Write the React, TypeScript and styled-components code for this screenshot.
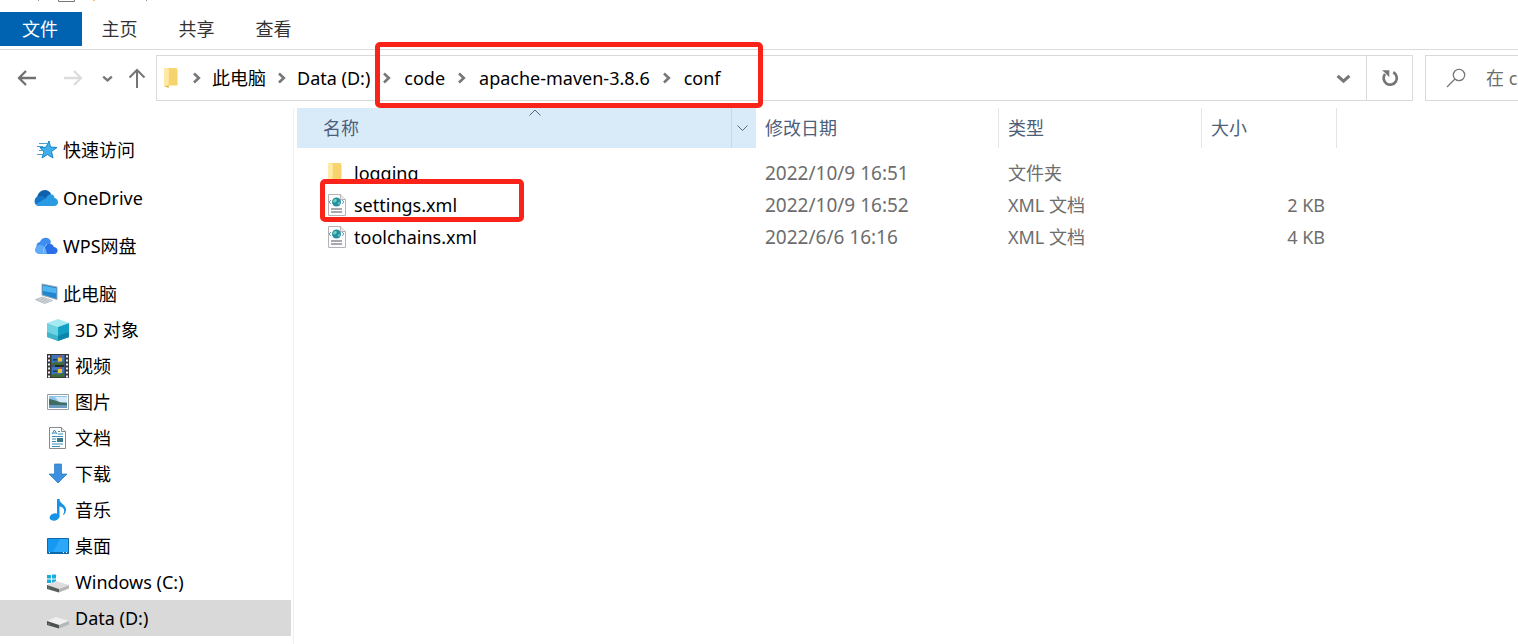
import React from 'react';
import styled, { createGlobalStyle } from 'styled-components';

const GlobalStyle = createGlobalStyle`
  * { box-sizing: border-box; }
  body {
    margin: 0;
    background: #fff;
    color: #000;
    font: 400 18px/24px "Noto Sans", "Noto Sans CJK SC", sans-serif;
  }
  button, input { font: inherit; color: inherit; }
  button { border: 0; background: none; padding: 0; cursor: default; }
  svg { display: block; flex: none; }
`;

const Window = styled.div`
  display: flex;
  flex-direction: column;
  min-height: 100vh;
  overflow: hidden;
`;

const TitleStrip = styled.div`
  display: flex;
  height: 12px;
  padding-left: 38px;
`;

const Ribbon = styled.nav`
  display: flex;
  height: 38px;
  padding-bottom: 3px;
  border-bottom: 1px solid #dadbdc;
`;

const RibbonTab = styled.button<{ $primary?: boolean }>`
  width: ${p => (p.$primary ? '82px' : '77px')};
  height: 34px;
  padding-right: 2px;
  background: ${p => (p.$primary ? '#0063b1' : 'transparent')};
  color: ${p => (p.$primary ? '#fff' : '#333')};
`;

const AddressRow = styled.div`
  display: flex;
  align-items: center;
  height: 58px;
  padding-bottom: 2px;
`;

const History = styled.div`
  display: flex;
  align-items: center;
  width: 156px;
  flex: none;
  padding-left: 4px;
`;

const NavButton = styled.button<{ $width: number }>`
  display: flex;
  justify-content: center;
  width: ${p => p.$width}px;
`;

const AddressBox = styled.div`
  display: flex;
  align-items: center;
  flex: 1;
  min-width: 0;
  height: 46px;
  padding-left: 6px;
  border: 1px solid #d9d9d9;
`;

const Separator = styled.span`
  display: flex;
  justify-content: center;
  width: 31px;
`;

const Crumbs = styled.div`
  display: flex;
  align-items: center;
  margin-left: 3px;
  white-space: nowrap;
`;

const CrumbGroup = styled(Crumbs)`
  position: relative;
  margin-left: 0;
  ${Separator} { width: 34px; }
`;

const Spacer = styled.div`
  flex: 1;
`;

const BoxButton = styled.button<{ $divided?: boolean }>`
  display: flex;
  align-items: center;
  justify-content: center;
  width: 46px;
  height: 44px;
  border-left: ${p => (p.$divided ? '1px solid #d9d9d9' : '0')};
`;

const SearchBox = styled.label`
  display: flex;
  align-items: center;
  gap: 20px;
  flex: none;
  width: 93px;
  height: 46px;
  margin-left: 12px;
  padding-left: 20px;
  border: 1px solid #d9d9d9;
  border-right: 0;
`;

const SearchInput = styled.input`
  flex: 1;
  min-width: 0;
  padding: 0;
  border: 0;
  outline: 0;
  background: none;
  &::placeholder { color: #6d6d6d; opacity: 1; }
`;

const Highlight = styled.span<{ $kind: 'path' | 'file' }>`
  position: absolute;
  z-index: 2;
  border: 5px solid #f9231a;
  border-radius: 5px;
  pointer-events: none;
  ${p => p.$kind === 'path'
    ? 'inset: -24px -42px -18px 5px;'
    : 'top: -10px; bottom: -1px; left: 23px; width: 204px;'}
`;

const Body = styled.div`
  display: flex;
  flex: 1;
`;

const Sidebar = styled.nav`
  flex: none;
  width: 294px;
  padding: 24px 2px 8px 0;
  border-right: 1px solid #f0f0f0;
`;

const Tree = styled.ul`
  margin: 0;
  padding: 0;
  list-style: none;
`;

const TreeGroup = styled.li`
  & + & { margin-top: 12px; }
`;

const TreeLink = styled.a<{ $child?: boolean; $selected?: boolean }>`
  display: flex;
  align-items: center;
  gap: 5px;
  height: 36px;
  padding-left: ${p => (p.$child ? '46px' : '34px')};
  background: ${p => (p.$selected ? '#d9d9d9' : 'transparent')};
  color: #000;
  text-decoration: none;
  white-space: nowrap;
`;

const Content = styled.main`
  flex: 1;
  min-width: 0;
  padding-left: 3px;
`;

const FileTable = styled.table`
  width: 1040px;
  table-layout: fixed;
  border-collapse: separate;
  border-spacing: 0;
`;

const HeadCell = styled.th<{ $width: number; $sorted?: boolean }>`
  width: ${p => p.$width}px;
  height: 40px;
  padding: 0;
  background: ${p => (p.$sorted ? '#d9ebf9' : 'transparent')};
  border-right: ${p => (p.$sorted ? '0' : '1px solid #e5e5e5')};
  color: #4c607a;
  font-weight: 400;
  text-align: left;
`;

const HeadInner = styled.div<{ $indent: number }>`
  position: relative;
  display: flex;
  align-items: center;
  justify-content: space-between;
  height: 40px;
  padding-left: ${p => p.$indent}px;
`;

const SortMark = styled.span`
  position: absolute;
  top: 1px;
  left: 232px;
`;

const FilterButton = styled.button`
  display: flex;
  align-items: center;
  justify-content: center;
  width: 25px;
  height: 40px;
  padding-right: 4px;
  border-left: 1px solid #c0d9ec;
`;

const Rows = styled.tbody`
  &::before { content: ""; display: block; height: 9px; }
`;

const Cell = styled.td<{ $kind?: 'date' | 'size' }>`
  height: 32px;
  padding: 0 ${p => (p.$kind === 'size' ? '12px' : '0')} 0 9px;
  color: #6d6d6d;
  font-size: ${p => (p.$kind === 'date' ? '19px' : '18px')};
  text-align: ${p => (p.$kind === 'size' ? 'right' : 'left')};
`;

const NameCell = styled.td`
  padding: 0;
`;

const FileName = styled.div`
  position: relative;
  display: flex;
  align-items: center;
  gap: 7px;
  height: 32px;
  padding-left: 30px;
`;

const Chevron = () => (
  <svg width="10" height="12" viewBox="0 0 10 12" fill="none" stroke="#777" strokeWidth="2.6"><path d="M2 1.5 6.8 6 2 10.5" /></svg>
);

const ArrowIcon = ({ color, flip }: { color: string; flip?: boolean }) => (
  <svg width="20" height="18" viewBox="0 0 20 18" fill="none" stroke={color} strokeWidth="2.3">
    <path d={flip ? 'M1 9h17M11 2l7 7-7 7' : 'M19 9H2M9 2 2 9l7 7'} />
  </svg>
);

const UpIcon = () => (
  <svg width="18" height="20" viewBox="0 0 18 20" fill="none" stroke="#757575" strokeWidth="2"><path d="M9 20V2M1.5 9.500 9 2l7.500 7.500" /></svg>
);

const DownChevron = ({ size, weight }: { size: number; weight: number }) => (
  <svg width={size} height={size} viewBox="0 0 14 14" fill="none" stroke="#777" strokeWidth={weight}><path d="m1.5 4.5 5.5 5 5.5-5" /></svg>
);

const RefreshIcon = () => (
  <svg width="18" height="18" viewBox="0 0 18 18" fill="none">
    <path d="M12.2 3.2A6.6 6.6 0 1 1 4 5" stroke="#757575" strokeWidth="2.7" />
    <path d="M1 1.3h7.300v6.900L6.100 6 3.400 3.300z" fill="#757575" />
  </svg>
);

const SearchIcon = () => (
  <svg width="20" height="20" viewBox="0 0 20 20" fill="none" stroke="#777" strokeWidth="1.3"><circle cx="13" cy="7" r="5.7" /><path d="M9 11 1 19" /></svg>
);

const FolderIcon = ({ width = 20 }: { width?: number }) => (
  <svg width={width} height="22" viewBox={`0 0 ${width} 22`}>
    <path d="M1 1h13v17H1z" fill="#f8d775" />
    <path d="M1 1h3l2 2v17.500L1 19z" fill="#ffe9a6" />
    <path d="M6 2.500h8.500v16H5.500z" fill="#f6d36d" />
    <path d="m1 19 4.500 2 .500-2.500z" fill="#e5b94a" />
  </svg>
);

const XmlIcon = () => (
  <svg width="20" height="24" viewBox="0 0 20 24">
    <path d="M1.500 1.500h12l5 5v16h-17z" fill="#fcfcfc" stroke="#b4b4b4" />
    <path d="M13.500 1.500v5h5" fill="#eee" stroke="#b4b4b4" />
    <circle cx="9.5" cy="9" r="4.500" fill="#278fa3" />
    <path d="M7 6.500c2-1.500 3.500 0 2.500 1.500s-2 2-3.500.5zM10.500 10l2.500-1-1 3z" fill="#77d3b8" />
    <path d="m4 7-2 2 2 2M15 7l2 2-2 2" stroke="#6f9fc4" fill="none" />
    <path d="M4 16h11M4 19h11" stroke="#8a8d96" strokeWidth="1.500" />
  </svg>
);

const art: Record<string, React.ReactNode> = {
  star: <>
    <path d="m15 3 1.500 6 6.500.5-5.500 4 1.500 6.500-5.500-3.500L8 20l2-6-4-4.500 6-.3z" fill="#3fb0ec" stroke="#1b83c4" />
    <path d="M5 5.500h8M3 8.500h6M5 12.500h4M3 16.500h6" stroke="#4a9fd5" />
  </>,
  oneDrive: <>
    <path d="M3 12C4 3 14 1.500 17 8l-3 5-9 3z" fill="#0f5fad" />
    <path d="M5 20c-6-.5-6-9.500.500-10 3-.5 5 .5 8 3z" fill="#1474c8" />
    <path d="M12 12.500C14 7 20 7 20.500 12c5 1 4.500 8-.500 8H5c-1.500 0-2.500-1-3.500-2C5 17 8 14 12 12.500z" fill="#2a9be2" />
  </>,
  wps: <>
    <path d="M4 15c-3-3-1-7 2-7C8 2 16 3 17 8l-4 9z" fill="#3d8eee" />
    <path d="M9 20c-2-9 8-14 11-7 5 .5 4.500 7 0 7z" fill="#2b6fe6" />
    <path d="M2 13c4-4 10-2 11 7H5c-4-.5-5-4-3-7z" fill="#5eabf9" />
    <path d="M10 19c-1-3 0-6 3-9" stroke="#9bd0ff" />
  </>,
  computer: <>
    <path d="m8 2 15 3v12.500L8 13z" fill="#1f86cf" stroke="#9aa8b2" />
    <path d="m9 3.500 13 2.700v5L9 9z" fill="#4fb4ef" />
    <path d="m1.500 17.500 7-2.500 10 3.500-8 3z" fill="#e6eaed" stroke="#aab2b8" strokeWidth=".8" />
    <path d="m3.500 17.500 8 3M5.500 16.700l8 3M7.500 16l8 3" stroke="#9aa4ab" strokeWidth=".7" />
  </>,
  cube: <>
    <path d="M1 5 12 1l11 4-11 4z" fill="#a5eaf2" />
    <path d="M1 5 12 9v14L1 19z" fill="#6dd3e0" />
    <path d="M1 14 12 18v5L1 19z" fill="#3fb4c8" />
    <path d="M12 9 23 5v14l-11 4z" fill="#149fc4" />
    <path d="M12 18 23 14v5l-11 4z" fill="#0c86a8" />
  </>,
  video: <>
    <path d="M1 0h22v24H1z" fill="#383838" />
    <path d="M5.500 1h13v10.500h-13zM5.500 12.500h13V23h-13z" fill="#3f74c0" />
    <path d="M6 9.500 9 8l4 1 5-2v4H6zM6 21l3-1.500 4 1 5-2V23H6z" fill="#3f6b34" />
    <path d="M12 3.500h4v4h-4zM12 15h4v4h-4z" fill="#e8c42f" />
    <path d="M13 1.500h3v2h-3zM13 13h3v2h-3z" fill="#c9483a" />
    <path d="M7 5h4v1.500H7zM7 16.500h4V18H7z" fill="#20374f" />
    <path d="M9 11h9v2H9z" fill="#1f2c25" />
    <path d="M3 1.500v22M21 1.500v22" stroke="#f1f1f1" strokeWidth="2" strokeDasharray="2 2" />
  </>,
  picture: <>
    <path d="M1.500 4.500h21v15h-21z" fill="#fff" stroke="#9aa0a5" />
    <path d="M3 6h18v12H3z" fill="#8fc3ea" />
    <path d="M9 7h12v5H13z" fill="#d6ebf8" />
    <path d="M3 9c5 0 9 4 18 4v2H3z" fill="#3f6d62" />
    <path d="M3 15h18v3H3z" fill="#6b9cc0" />
  </>,
  document: <>
    <path d="M3.500 1.500h12l4 4v17h-16z" fill="#fff" stroke="#858b8e" />
    <path d="M15.500 1.500v4h4" fill="#eee" stroke="#858b8e" />
    <path d="m6 8 2.500-4L11 8M7 7h3M12 5.500h2M12 8h5M6 10.500h11M6 13h4M6 15.500h4M6 18h11M6 20.500h8" stroke="#398db8" />
    <path d="M11 12h6v4h-6z" fill="#39778b" />
  </>,
  download: <path d="M8.500 2h7v10H21l-9 9-9-9h5.500z" fill="#3b91df" stroke="#2777bd" strokeWidth=".7" />,
  music: <>
    <ellipse cx="8.500" cy="19" rx="5" ry="3.500" fill="#1693e6" transform="rotate(-15 8.500 19)" />
    <path d="M11 1h2.500c0 5 7 5.500 6.500 11-.2 3-2 5-3 5 3-6-.5-8-3.500-8.500V19H11z" fill="#1693e6" />
  </>,
  desktop: <>
    <path d="M1.500 4.500h21v15h-21z" fill="#159af3" stroke="#1269aa" />
    <path d="M14 5h8v13H7z" fill="#2ca8fa" />
    <path d="M2 18.500h20" stroke="#0a68ab" />
    <path d="M3 18.500h1M17 18.500h1M20 18.500h1" stroke="#fff" />
  </>,
  system: <>
    <path d="M1 5h4v3.500H1zM6 4.500h4v4H6zM1 9.500h4V13H1zM6 9.500h4v4H6z" fill="#1aaddc" />
    <path d="m1 15 9-4 13 4-10 4z" fill="#dedede" />
    <path d="m1 15 12 4v3.500L1 19z" fill="#555c58" />
    <path d="m13 19 10-4v3.500l-10 4z" fill="#b4b6b7" />
    <path d="M3 17.500v1" stroke="#6ec58a" />
  </>,
  drive: <>
    <path d="m1 15 9-4 13 4-10 4z" fill="#f0f0f0" />
    <path d="m1 15 12 4v3.500L1 19z" fill="#4c504e" />
    <path d="m13 19 10-4v3.500l-10 4z" fill="#b4b6b7" />
    <path d="M3 17.500v1" stroke="#8cc39b" />
  </>,
};

const TreeIcon = ({ name }: { name: string }) => (
  <svg width="24" height="24" viewBox="0 0 24 24" fill="none">{art[name]}</svg>
);

type Item = { label: string; icon: string; selected?: boolean; children?: Item[] };

const tree: Item[] = [
  { label: '快速访问', icon: 'star' },
  { label: 'OneDrive', icon: 'oneDrive' },
  { label: 'WPS网盘', icon: 'wps' },
  {
    label: '此电脑', icon: 'computer', children: [
      { label: '3D 对象', icon: 'cube' },
      { label: '视频', icon: 'video' },
      { label: '图片', icon: 'picture' },
      { label: '文档', icon: 'document' },
      { label: '下载', icon: 'download' },
      { label: '音乐', icon: 'music' },
      { label: '桌面', icon: 'desktop' },
      { label: 'Windows (C:)', icon: 'system' },
      { label: 'Data (D:)', icon: 'drive', selected: true },
    ],
  },
];

const files = [
  { name: 'logging', folder: true, date: '2022/10/9 16:51', type: '文件夹', size: '' },
  { name: 'settings.xml', marked: true, date: '2022/10/9 16:52', type: 'XML 文档', size: '2 KB' },
  { name: 'toolchains.xml', date: '2022/6/6 16:16', type: 'XML 文档', size: '4 KB' },
];

const Crumb = ({ label }: { label: string }) => (
  <><Separator><Chevron /></Separator><button>{label}</button></>
);

export default function App() {
  return (
    <Window>
      <GlobalStyle />
      <TitleStrip>
        <svg width="110" height="2" viewBox="0 0 110 2">
          <path d="M0 0h1v1H0zM108 0h1v1h-1z" fill="#999" />
          <path d="M20.500 0v1.500h16V0" fill="none" stroke="#777" />
          <path d="M55 0h2v1h-2z" fill="#f5c860" />
        </svg>
      </TitleStrip>
      <Ribbon>
        <RibbonTab $primary>文件</RibbonTab>
        <RibbonTab>主页</RibbonTab>
        <RibbonTab>共享</RibbonTab>
        <RibbonTab>查看</RibbonTab>
      </Ribbon>
      <AddressRow>
        <History>
          <NavButton $width={46} aria-label="后退"><ArrowIcon color="#707070" /></NavButton>
          <NavButton $width={46} aria-label="前进"><ArrowIcon color="#dcdcdc" flip /></NavButton>
          <NavButton $width={22} aria-label="最近位置"><DownChevron size={11} weight={3} /></NavButton>
          <NavButton $width={38} aria-label="向上"><UpIcon /></NavButton>
        </History>
        <AddressBox>
          <FolderIcon width={15} />
          <Crumbs>
            <Crumb label="此电脑" />
            <Crumb label="Data (D:)" />
            <CrumbGroup>
              <Crumb label="code" />
              <Crumb label="apache-maven-3.8.6" />
              <Crumb label="conf" />
              <Highlight $kind="path" />
            </CrumbGroup>
          </Crumbs>
          <Spacer />
          <BoxButton aria-label="展开"><DownChevron size={15} weight={3} /></BoxButton>
          <BoxButton $divided aria-label="刷新"><RefreshIcon /></BoxButton>
        </AddressBox>
        <SearchBox>
          <SearchIcon />
          <SearchInput type="text" aria-label="搜索" placeholder="在 conf 中搜索" />
        </SearchBox>
      </AddressRow>
      <Body>
        <Sidebar>
          <Tree>
            {tree.map(item => (
              <TreeGroup key={item.label}>
                <TreeLink href="#"><TreeIcon name={item.icon} />{item.label}</TreeLink>
                {item.children && (
                  <Tree>
                    {item.children.map(child => (
                      <li key={child.label}>
                        <TreeLink href="#" $child $selected={child.selected}>
                          <TreeIcon name={child.icon} />{child.label}
                        </TreeLink>
                      </li>
                    ))}
                  </Tree>
                )}
              </TreeGroup>
            ))}
          </Tree>
        </Sidebar>
        <Content>
          <FileTable>
            <thead>
              <tr>
                <HeadCell $width={459} $sorted>
                  <HeadInner $indent={26}>
                    名称
                    <SortMark>
                      <svg width="12" height="7" viewBox="0 0 12 7" fill="none" stroke="#55657a"><path d="m.5 6.500 5.500-5.500 5.500 5.500" /></svg>
                    </SortMark>
                    <FilterButton aria-label="筛选">
                      <svg width="11" height="7" viewBox="0 0 11 7" fill="none" stroke="#55657a"><path d="m.5.500 5 5 5-5" /></svg>
                    </FilterButton>
                  </HeadInner>
                </HeadCell>
                <HeadCell $width={243}><HeadInner $indent={9}>修改日期</HeadInner></HeadCell>
                <HeadCell $width={203}><HeadInner $indent={9}>类型</HeadInner></HeadCell>
                <HeadCell $width={135}><HeadInner $indent={9}>大小</HeadInner></HeadCell>
              </tr>
            </thead>
            <Rows>
              {files.map(file => (
                <tr key={file.name}>
                  <NameCell>
                    <FileName>
                      {file.folder ? <FolderIcon /> : <XmlIcon />}
                      {file.name}
                      {file.marked && <Highlight $kind="file" />}
                    </FileName>
                  </NameCell>
                  <Cell $kind="date">{file.date}</Cell>
                  <Cell>{file.type}</Cell>
                  <Cell $kind="size">{file.size}</Cell>
                </tr>
              ))}
            </Rows>
          </FileTable>
        </Content>
      </Body>
    </Window>
  );
}
